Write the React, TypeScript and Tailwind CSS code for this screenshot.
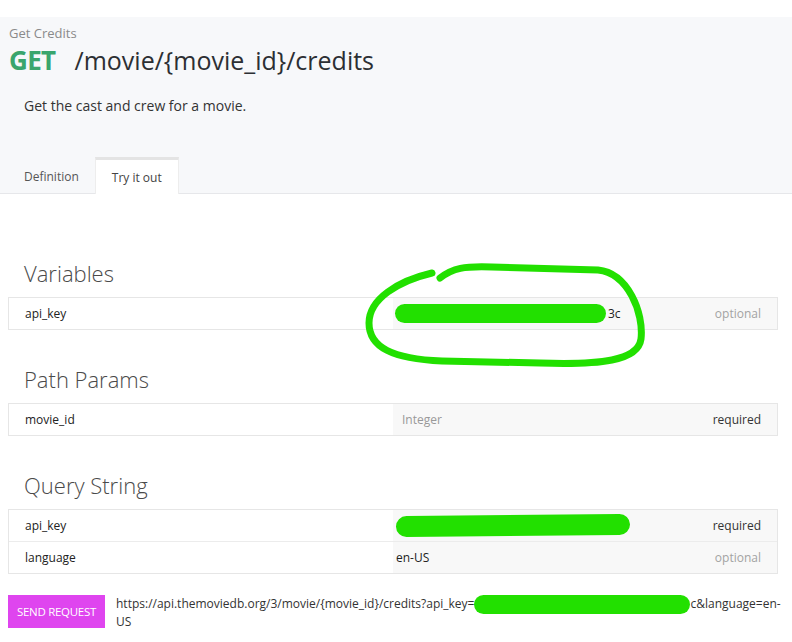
import React from "react";

const GREEN = "bg-[#22e000]";

const Redact = ({ w, h = 19, tilt = false }: { w: number; h?: number; tilt?: boolean }) => (
  <span
    className={`inline-block align-middle rounded-full ${GREEN} ${tilt ? "-rotate-[0.6deg]" : ""}`}
    style={{ width: w, height: h }}
  />
);

const ParamRow = ({
  name,
  value,
  status,
  last = true,
}: {
  name: string;
  value: React.ReactNode;
  status: "optional" | "required";
  last?: boolean;
}) => (
  <div className={`grid grid-cols-2 ${last ? "h-[31px]" : "h-[32px] border-b border-[#ececec]"}`}>
    <div className="flex items-center pl-4 bg-white text-[12px] text-[#222]">{name}</div>
    <div className="flex items-center justify-between pl-[9px] pr-4 bg-[#f8f8f8] text-[12px]">
      <div className="flex items-center">{value}</div>
      <span className={status === "required" ? "text-[#333]" : "text-[#a3a3a3]"}>{status}</span>
    </div>
  </div>
);

const Section = ({ title, children, extra }: { title: string; children: React.ReactNode; extra?: React.ReactNode }) => (
  <div className="relative">
    <h2 className="pl-6 text-[22px] leading-[30px] font-light text-[#4a4a4a] mb-[9px]">{title}</h2>
    <div className="ml-2 mr-[14px] border border-[#e6e6e6]">{children}</div>
    {extra}
  </div>
);

export default function App() {
  return (
    <div className="w-[792px] h-[642px] overflow-hidden bg-white font-['Open_Sans',sans-serif]">
      <div className="h-[17px] bg-white" />

      {/* HEADER */}
      <div className="bg-[#f7f8fa] border-b border-[#e6e7ea]">
        <div className="pt-[7px] pl-[9px]">
          <div className="text-[13px] leading-[18px] text-[#8a8a8a]">Get Credits</div>
          <div className="mt-[2px] flex items-baseline leading-[32px]">
            <span className="text-[26px] font-bold text-[#3aa56d] tracking-tight">GET</span>
            <span className="ml-[19px] text-[25px] text-[#2c2f33]">/movie/&#123;movie_id&#125;/credits</span>
          </div>
        </div>
        <p className="mt-5 pl-6 text-[14px] leading-5 text-[#333]">Get the cast and crew for a movie.</p>

        {/* TABS */}
        <div className="mt-[41px] flex pl-2 h-[36px]">
          <button className="px-4 text-[12px] text-[#555] pt-[4px]">Definition</button>
          <button className="px-4 bg-white border-t-[3px] border-x border-t-[#e4e4e4] border-x-[#ededed] -mb-px text-[12px] text-[#444] pt-[1px]">
            Try it out
          </button>
        </div>
      </div>

      {/* BODY */}
      <div className="pt-[64px]">
        <Section
          title="Variables"
          extra={
            <svg
              className="absolute left-[360px] top-[3px] pointer-events-none"
              width="290"
              height="110"
              viewBox="0 0 290 110"
              fill="none"
            >
              <path
                d="M80 17 C 93 7, 104 5, 132 6 L 238 9 C 268 12, 284 52, 281 78 C 278 100, 240 104, 180 102 L 82 100 C 32 98, 9 86, 9 62 C 9 38, 38 20, 72 12"
                stroke="#22e000"
                strokeWidth="7"
                strokeLinecap="round"
              />
            </svg>
          }
        >
          <ParamRow
            name="api_key"
            value={
              <>
                <span className="-ml-[7px] flex"><Redact w={211} /></span>
                <span className="ml-[2px] text-[#222]">3c</span>
              </>
            }
            status="optional"
          />
        </Section>

        <div className="mt-[34px]">
          <Section title="Path Params">
            <ParamRow name="movie_id" value={<span className="text-[#999]">Integer</span>} status="required" />
          </Section>
        </div>

        <div className="mt-[34px]">
          <Section title="Query String">
            <ParamRow
              name="api_key"
              value={<span className="-ml-[6px] flex"><Redact w={234} h={21} tilt /></span>}
              status="required"
              last={false}
            />
            <ParamRow name="language" value={<span className="-ml-[6px] text-[#222]">en-US</span>} status="optional" />
          </Section>
        </div>

        {/* SEND */}
        <div className="mt-[21px] flex items-start pl-2">
          <button className="w-[97px] h-[33px] shrink-0 bg-[#df45ef] text-white text-[11.5px] tracking-tight">
            SEND REQUEST
          </button>
          <div className="ml-[11px] text-[12px] leading-4 text-[#333]">
            https://api.themoviedb.org/3/movie/&#123;movie_id&#125;/credits?api_key=
            <Redact w={216} />
            c&amp;language=en-
            <br />
            US
          </div>
        </div>
      </div>
    </div>
  );
}
